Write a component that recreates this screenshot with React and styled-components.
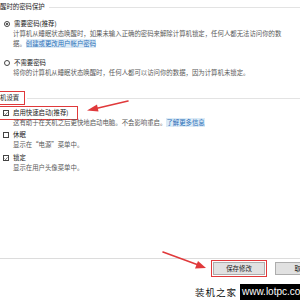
import React from 'react';
import styled, {createGlobalStyle} from 'styled-components';

const GlobalStyle = createGlobalStyle`
  html, body {
    margin: 0;
    padding: 0;
    background: #fff;
  }
  body {
    font-family: "Noto Sans CJK SC", "Liberation Sans", sans-serif;
  }
`;

const Page = styled.div`
  position: relative;
  width: 300px;
  height: 300px;
  overflow: hidden;
  display: flex;
  flex-direction: column;
  background: #fff;
`;

const Content = styled.div`
  flex: 1;
  display: flex;
  flex-direction: column;
  padding-top: 2px;
`;

const GroupHeader = styled.div`
  display: flex;
  align-items: center;
  gap: 4px;
  height: 10px;
  margin-top: ${props => props.$top || 0}px;
  font-size: 6.4px;
  line-height: 10px;
  color: #1e1e1e;
  white-space: nowrap;
`;

const HeaderText = styled.span`
  padding-left: ${props => props.$indent || 0}px;
  ${props =>
    props.$marked &&
    `
    outline: 1.5px solid #e0393b;
    outline-offset: 1px;
    padding-right: 4px;
  `}
`;

const HeaderLine = styled.div`
  flex: 1;
  height: 1px;
  background: #e3e3e3;
`;

const OptionRow = styled.div`
  display: flex;
  align-items: center;
  gap: 4px;
  height: 10px;
  margin-top: ${props => props.$top || 0}px;
  padding-left: ${props => props.$indent}px;
  font-size: 6.4px;
  line-height: 10px;
  color: #1a1a1a;
  white-space: nowrap;
  align-self: flex-start;
  ${props =>
    props.$marked &&
    `
    outline: 1.5px solid #e0393b;
    outline-offset: 1px;
    padding-right: 8px;
  `}
`;

const Radio = styled.span`
  box-sizing: border-box;
  width: 6px;
  height: 6px;
  border: 1px solid #444;
  border-radius: 50%;
  display: flex;
  align-items: center;
  justify-content: center;
  &::after {
    content: '';
    width: 2px;
    height: 2px;
    border-radius: 50%;
    background: ${props => (props.$on ? '#222' : 'transparent')};
  }
`;

const Check = styled.span`
  box-sizing: border-box;
  width: 6px;
  height: 6px;
  border: 1px solid #444;
  display: flex;
  align-items: center;
  justify-content: center;
  svg {
    display: ${props => (props.$on ? 'block' : 'none')};
  }
`;

const Desc = styled.div`
  padding-left: 13px;
  padding-right: 10px;
  font-size: 6.4px;
  line-height: 10px;
  color: #5a5a5a;
  white-space: nowrap;
`;

const Link = styled.span`
  color: #2a6fb8;
  background: #dcebf7;
`;

const Footer = styled.div`
  height: 42px;
  border-top: 1px solid #dcdcdc;
  display: flex;
  gap: 10px;
  padding-left: 213px;
  padding-top: 3px;
  box-sizing: border-box;
`;

const Button = styled.div`
  flex: none;
  box-sizing: border-box;
  width: 52px;
  height: 13px;
  background: #e1e1e1;
  border: 1px solid #adadad;
  font-size: 6.4px;
  line-height: 11px;
  text-align: center;
  color: #222;
  ${props =>
    props.$marked &&
    `
    outline: 1.5px solid #e0393b;
    outline-offset: 1px;
  `}
`;

const Arrow = styled.svg`
  position: absolute;
  left: 0;
  top: 0;
  pointer-events: none;
`;

const Watermark = styled.div`
  position: absolute;
  right: 0;
  bottom: 0;
  display: flex;
  align-items: flex-end;
  gap: 3px;
`;

const MarkName = styled.span`
  font-family: "Noto Sans CJK SC", serif;
  font-size: 9.5px;
  line-height: 14px;
  color: #111;
  letter-spacing: 1px;
  padding-bottom: 1px;
`;

const MarkSite = styled.span`
  background: #000;
  color: #fff;
  font-family: "Liberation Sans", Arial, sans-serif;
  font-size: 10px;
  line-height: 16px;
  padding-left: 2px;
  width: 58px;
  overflow: hidden;
  white-space: nowrap;
`;

const CheckMark = () => (
  <svg width="5" height="5" viewBox="0 0 10 10">
    <path d="M1.5 5.2 L4 7.8 L8.8 2" fill="none" stroke="#333" strokeWidth="1.6" />
  </svg>
);

export default function App() {
  return (
    <Page>
      <GlobalStyle />
      <Content>
        <GroupHeader>
          <HeaderText>醒时的密码保护</HeaderText>
          <HeaderLine />
        </GroupHeader>
        <OptionRow $top={7} $indent={4}>
          <Radio $on />
          需要密码(推荐)
        </OptionRow>
        <Desc>计算机从睡眠状态唤醒时，如果未输入正确的密码来解除计算机锁定，任何人都无法访问你的数</Desc>
        <Desc>
          据。<Link>创建或更改用户帐户密码</Link>
        </Desc>
        <OptionRow $top={9} $indent={4}>
          <Radio />
          不需要密码
        </OptionRow>
        <Desc>将你的计算机从睡眠状态唤醒时，任何人都可以访问你的数据，因为计算机未锁定。</Desc>
        <GroupHeader $top={15}>
          <HeaderText $marked>机设置</HeaderText>
          <HeaderLine />
        </GroupHeader>
        <OptionRow $top={5} $indent={3} $marked>
          <Check $on>
            <CheckMark />
          </Check>
          启用快速启动(推荐)
        </OptionRow>
        <Desc>
          这有助于在关机之后更快地启动电脑。不会影响重启。<Link>了解更多信息</Link>
        </Desc>
        <OptionRow $top={2} $indent={3}>
          <Check>
            <CheckMark />
          </Check>
          休眠
        </OptionRow>
        <Desc>显示在“电源”菜单中。</Desc>
        <OptionRow $top={3} $indent={3}>
          <Check $on>
            <CheckMark />
          </Check>
          锁定
        </OptionRow>
        <Desc>显示在用户头像菜单中。</Desc>
      </Content>
      <Footer>
        <Button $marked>保存修改</Button>
        <Button>取消</Button>
      </Footer>
      <Arrow width="300" height="300" viewBox="0 0 300 300">
        <path d="M128 101 L96 108.5" stroke="#e0393b" strokeWidth="1.6" fill="none" strokeLinecap="round" />
        <path d="M87 110.5 L97 104.5 L98.5 111.5 Z" fill="#e0393b" />
        <path d="M163 252 L197 264.5" stroke="#e0393b" strokeWidth="1.6" fill="none" strokeLinecap="round" />
        <path d="M206 268 L195 268.5 L198 261 Z" fill="#e0393b" />
      </Arrow>
      <Watermark>
        <MarkName>装机之家</MarkName>
        <MarkSite>www.lotpc.com</MarkSite>
      </Watermark>
    </Page>
  );
}
